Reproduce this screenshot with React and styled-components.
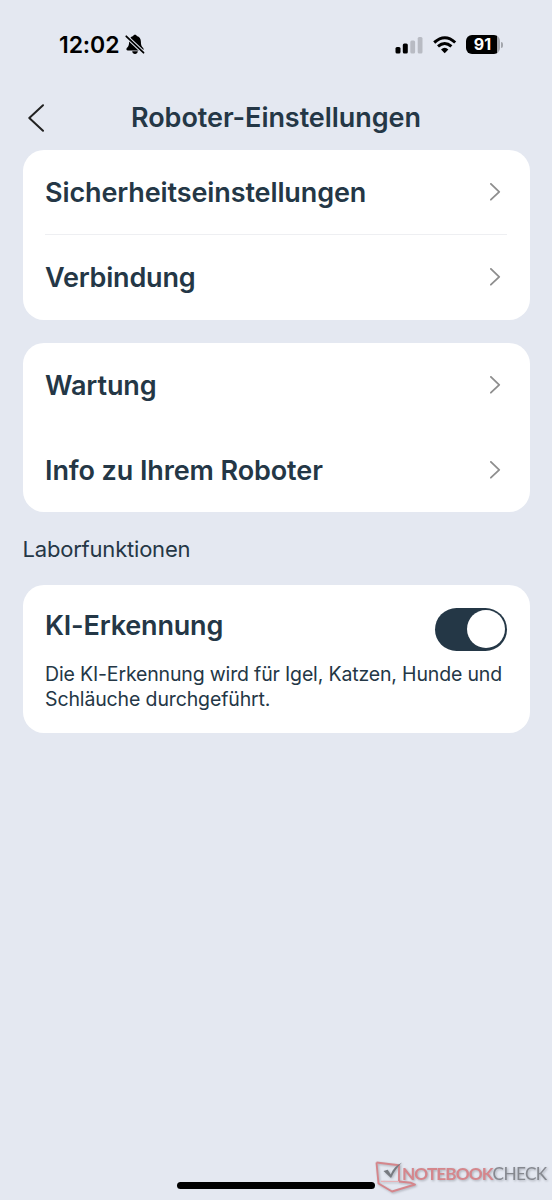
import React from "react";
import styled, { createGlobalStyle } from "styled-components";

const GlobalStyle = createGlobalStyle`
  * { box-sizing: border-box; }
  html, body { margin: 0; background: #e4e8f1; }
  h1, h2, p { margin: 0; }
`;

const Screen = styled.div`
  width: 552px;
  height: 1200px;
  overflow: hidden;
  position: relative;
  display: flex;
  flex-direction: column;
  background: #e4e8f1;
  color: #243746;
  font-family: Inter, "Liberation Sans", sans-serif;
`;

const StatusBar = styled.div`
  height: 89px;
  padding: 0 49px 0 59px;
  display: flex;
  align-items: center;
  justify-content: space-between;
  color: #000;
`;

const StatusGroup = styled.div`
  display: flex;
  align-items: center;
  gap: ${(p) => p.$gap}px;
`;

const Clock = styled.span`
  font-size: 23px;
  font-weight: 600;
  line-height: 28px;
  letter-spacing: ${(p) => p.$tracking}px;
  padding-top: 1px;
`;

const Battery = styled.div`
  display: flex;
  align-items: center;
  gap: 1px;
`;

const BatteryBody = styled.div`
  width: 34px;
  height: 19px;
  border-radius: 6px;
  background: linear-gradient(90deg, #000 31px, #a3a6ad 31px);
  color: #fff;
  font-size: 16px;
  font-weight: 700;
  line-height: 19px;
  padding-right: 1px;
  text-align: center;
`;

const BatteryTip = styled.div`
  width: 2px;
  height: 6px;
  border-radius: 0 2px 2px 0;
  background: #a3a6ad;
`;

const Header = styled.header`
  height: 61px;
  padding: 0 28px 3px;
  display: grid;
  grid-template-columns: 16px 1fr 16px;
  align-items: center;
`;

const Title = styled.h1`
  font-size: 27px;
  font-weight: 600;
  line-height: 34px;
  letter-spacing: ${(p) => p.$tracking}px;
  text-align: center;
  white-space: nowrap;
`;

const Content = styled.main`
  padding: 0 22.5px;
  display: flex;
  flex-direction: column;
`;

const Card = styled.section`
  background: #fff;
  border-radius: 21px;
  padding: ${(p) => p.$padding || "0 22.5px"};
  margin-bottom: ${(p) => p.$after || 0}px;
`;

const Row = styled.div`
  height: ${(p) => p.$height}px;
  display: flex;
  align-items: center;
  justify-content: space-between;
  padding: 0 6px 0 0;
  border-bottom: ${(p) => (p.$divided ? "1px solid #eeeff2" : "0")};
`;

const Label = styled.h2`
  font-size: 27px;
  font-weight: 600;
  line-height: 34px;
  letter-spacing: ${(p) => p.$tracking || 0}px;
  padding-top: ${(p) => p.$drop || 0}px;
  white-space: nowrap;
`;

const SectionTitle = styled.p`
  font-size: 22px;
  line-height: 28px;
  letter-spacing: ${(p) => p.$tracking}px;
  margin: 0 0 22.5px;
`;

const SwitchRow = styled.div`
  display: flex;
  justify-content: space-between;
  align-items: flex-start;
  height: 54.5px;
`;

const Switch = styled.button`
  width: 72px;
  height: 43px;
  border: 0;
  border-radius: 22px;
  padding: 0 2px;
  background: #243746;
  display: flex;
  align-items: center;
  justify-content: flex-end;
`;

const Knob = styled.span`
  width: 38px;
  height: 38px;
  border-radius: 50%;
  background: #fff;
`;

const Description = styled.p`
  font-size: 19.5px;
  line-height: 25px;
  white-space: nowrap;
  letter-spacing: ${(p) => p.$tracking}px;
`;

const HomeIndicator = styled.div`
  position: absolute;
  left: 177px;
  top: 1182px;
  width: 198px;
  height: 7px;
  border-radius: 4px;
  background: #000;
`;

const Watermark = styled.div`
  position: absolute;
  left: 374px;
  top: 1159px;
  display: flex;
  align-items: flex-start;
  filter: drop-shadow(1px 1px 0.8px rgba(80, 84, 96, 0.4));
`;

const Brand = styled.span`
  font-family: Lato, sans-serif;
  font-size: 17.2px;
  line-height: 20px;
  font-weight: ${(p) => (p.$strong ? 700 : 400)};
  color: ${(p) => (p.$strong ? "#d5868c" : "#85888f")};
  letter-spacing: ${(p) => p.$tracking}px;
  margin: 5px 0 0 ${(p) => (p.$strong ? -14 : 0)}px;
`;

const Chevron = () => (
  <svg width="11" height="18" viewBox="0 0 11 18" fill="none">
    <path d="M.9 .9 9.200 8.800 .9 16.700" stroke="#8e8e8e" strokeWidth="1.800" strokeLinecap="round" strokeLinejoin="round" />
  </svg>
);

const BackIcon = () => (
  <svg width="17" height="28" viewBox="0 0 17 28" fill="none">
    <path d="M15 1.200 1.300 14 15 26.800" stroke="#222" strokeWidth="2" strokeLinecap="round" strokeLinejoin="round" />
  </svg>
);

const MutedBell = () => (
  <svg width="20" height="21" viewBox="0 0 20 21">
    <path d="M10 .7c.9 0 1.600.5 1.800 1.300 2.700.8 4.100 2.900 4.100 5.800 0 3.200.5 4.400 1.800 5.800.8.9 1.100 1.400.8 2.100-.2.5-.6.7-1.300.7H2.800c-.7 0-1.100-.2-1.300-.7-.3-.7 0-1.200.8-2.100 1.300-1.400 1.800-2.600 1.800-5.800 0-2.900 1.400-5 4.100-5.800C8.400 1.200 9.100.7 10 .7Z" fill="#000" />
    <path d="M7.200 17.300h5.600c-.2 1.700-1.300 2.700-2.800 2.700s-2.600-1-2.800-2.700Z" fill="#000" />
    <path d="m1.300 2.300 17.200 16.400" stroke="#e4e8f1" strokeWidth="3.800" />
    <path d="m1.300 2.300 17.200 16.400" stroke="#000" strokeWidth="1.800" strokeLinecap="round" />
  </svg>
);

const Signal = () => (
  <svg width="28" height="18" viewBox="0 0 28 18">
    <rect x="0.500" y="11" width="5" height="6.600" rx="1.500" fill="#000" />
    <rect x="7.800" y="7.600" width="5" height="10" rx="1.500" fill="#000" />
    <rect x="15.300" y="4.400" width="4.800" height="13.200" rx="1.500" fill="#b8bbc3" />
    <rect x="22.700" y="0.900" width="4.800" height="16.700" rx="1.500" fill="#b8bbc3" />
  </svg>
);

const Wifi = () => (
  <svg width="24" height="18" viewBox="0 0 24 18" fill="none" stroke="#000" strokeWidth="3">
    <path d="M1.200 6.500Q12-3 22.200 6.500" />
    <path d="M5 10.400Q11.700 4.500 18.400 10.400" />
    <path d="M8 13.500Q11.700 10.100 15.400 13.500L11.700 17.200Z" fill="#000" stroke="none" />
  </svg>
);

const BrandMark = () => (
  <svg width="42" height="34" viewBox="0 0 42 34" fill="none" strokeLinejoin="round">
    <path d="M7 22.300 25 22.500" stroke="#e6b2b7" strokeWidth="1.200" />
    <path d="M2.500 3.500 4.500 24.500 18 32.500 41 25.500 37 23.800 25 22.500" stroke="#d5868c" strokeWidth="1.900" />
    <path d="M2.500 3.500 25 6.300V22" stroke="#d5868c" strokeWidth="1.900" />
    <path d="m9.500 12 4.200-1.200 3 4.600C19 9.800 22.700 6.200 28 3.500c-4.200 4.200-7.700 8.500-11 15.500Z" fill="#777a80" />
  </svg>
);

const SettingsRow = ({ label, tracking, divided, height = 85, drop }) => (
  <Row $divided={divided} $height={height}>
    <Label $tracking={tracking} $drop={drop}>{label}</Label>
    <Chevron />
  </Row>
);

export default function App() {
  return (
    <Screen>
      <GlobalStyle />
      <StatusBar>
        <StatusGroup $gap={5.5}>
          <Clock $tracking={-0.1}>12:02</Clock>
          <MutedBell />
        </StatusGroup>
        <StatusGroup $gap={9.5}>
          <Signal />
          <Wifi />
          <Battery>
            <BatteryBody>91</BatteryBody>
            <BatteryTip />
          </Battery>
        </StatusGroup>
      </StatusBar>
      <Header>
        <BackIcon />
        <Title $tracking={-0.05}>Roboter-Einstellungen</Title>
      </Header>
      <Content>
        <Card $after={23}>
          <SettingsRow label="Sicherheitseinstellungen" tracking={-0.11} drop={2} divided />
          <SettingsRow label="Verbindung" tracking={-0.2} height={84.5} drop={2} />
        </Card>
        <Card $after={22.5}>
          <SettingsRow label="Wartung" tracking={-0.1} height={84.5} drop={3} />
          <SettingsRow label="Info zu Ihrem Roboter" tracking={-0.1} drop={3} />
        </Card>
        <SectionTitle $tracking={-0.2}>Laborfunktionen</SectionTitle>
        <Card $padding="22.5px 22.5px 21.4px">
          <SwitchRow>
            <Label $tracking={-0.17} $drop={1}>KI-Erkennung</Label>
            <Switch role="switch" aria-checked="true" aria-label="KI-Erkennung">
              <Knob />
            </Switch>
          </SwitchRow>
          <Description $tracking={-0.16}>Die KI-Erkennung wird für Igel, Katzen, Hunde und</Description>
          <Description $tracking={-0.13}>Schläuche durchgeführt.</Description>
        </Card>
      </Content>
      <HomeIndicator />
      <Watermark>
        <BrandMark />
        <Brand $strong $tracking={-0.9}>NOTEBOOK</Brand>
        <Brand $tracking={-0.65}>CHECK</Brand>
      </Watermark>
    </Screen>
  );
}
